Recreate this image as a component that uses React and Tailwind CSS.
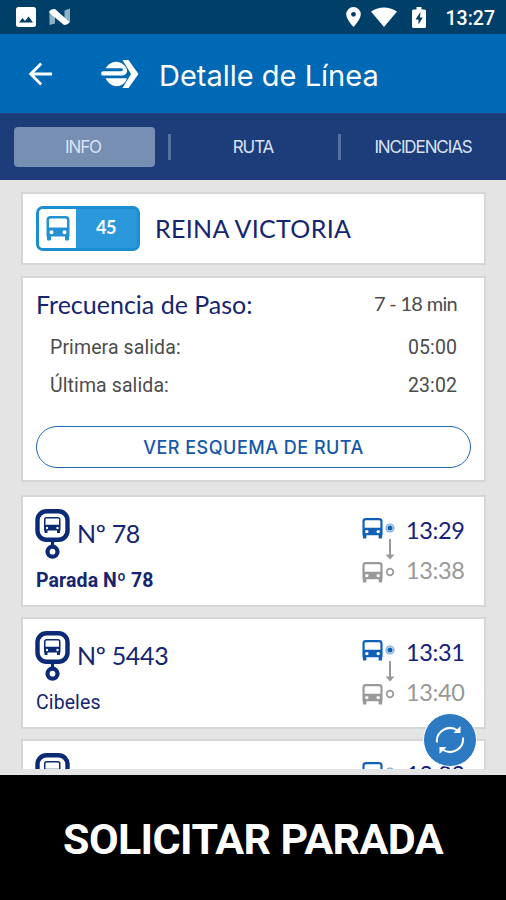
import React, { useState } from 'react';

const stops = [
    { id: 78, name: 'Parada Nº 78', next: '13:29', following: '13:38', highlighted: true },
    { id: 5443, name: 'Cibeles', next: '13:31', following: '13:40' },
    { id: null, name: '', next: '13:33', following: '' },
];

const tabs = ['INFO', 'RUTA', 'INCIDENCIAS'];

const BusIcon = ({ className }) => (
    <svg viewBox="0 0 24 25" preserveAspectRatio="none" fill="currentColor" className={className}>
        <path
            fillRule="evenodd"
            d="M4.5 0H19.5A4 4 0 0 1 23.5 4V20.5H23V23.5A1 1 0 0 1 22 24.5H20A1 1 0 0 1 19 23.5V20.5H5V23.5A1 1 0 0 1 4 24.5H2A1 1 0 0 1 1 23.5V20.5H.5V4A4 4 0 0 1 4.5 0ZM4.6 2.6A1.6 1.6 0 0 0 3 4.2V11.6H21V4.2A1.6 1.6 0 0 0 19.4 2.6ZM5.5 14.2A2 2 0 1 0 5.5 18.2A2 2 0 1 0 5.5 14.2ZM18.5 14.2A2 2 0 1 0 18.5 18.2A2 2 0 1 0 18.5 14.2Z"
        />
    </svg>
);

const StopIcon = () => (
    <svg viewBox="0 0 35 51" fill="none" className="-ml-px h-[51px] w-[35px] shrink-0 text-[#0b2a75]">
        <rect x="2.5" y="2.25" width="30" height="28.5" rx="9" stroke="currentColor" strokeWidth="4.4" />
        <path d="M17.5 31V38" stroke="currentColor" strokeWidth="3.2" />
        <circle cx="17.5" cy="42.7" r="5" stroke="currentColor" strokeWidth="4.2" />
        <path
            fill="currentColor"
            fillRule="evenodd"
            d="M11.5 8H23A2.5 2.5 0 0 1 25.5 10.5V21.5H25V24H22V21.5H12.5V24H9.5V21.5H9V10.5A2.5 2.5 0 0 1 11.5 8ZM11.5 9.4A1 1 0 0 0 10.5 10.4V15.8H24V10.4A1 1 0 0 0 23 9.4ZM12 17.8A1.2 1.2 0 1 0 12 20.2A1.2 1.2 0 1 0 12 17.8ZM22.5 17.8A1.2 1.2 0 1 0 22.5 20.2A1.2 1.2 0 1 0 22.5 17.8Z"
        />
    </svg>
);

const StatusBar = () => (
    <div className="flex h-[34px] items-center bg-[#003f68] pl-4 pr-[11px] text-white">
        <svg viewBox="0 0 20 20" className="h-5 w-5">
            <rect width="20" height="20" rx="2.5" fill="currentColor" />
            <path d="M3 15.5L6.5 11L9 14L12.5 9.5L17 15.5Z" fill="#003f68" />
        </svg>
        <svg viewBox="0 0 22 18" className="ml-[13px] h-[18px] w-[22px]">
            <path d="M.5 3H6V15.5L.5 17ZM15.500 2.500L21 .5V14.500H15.500Z" fill="#8fb1c8" />
            <path d="M.5 3Q3 .5 6 1L20.500 14Q19 17 15 17L.5 5Z" fill="currentColor" />
        </svg>
        <div className="ml-auto flex items-center">
            <svg viewBox="0 0 15 20" className="h-5 w-[15px]">
                <path fill="currentColor" fillRule="evenodd" d="M7.5 0A7.3 7.3 0 0 1 14.8 7.3C14.8 12.5 7.5 20 7.5 20S.2 12.5 .2 7.3A7.3 7.3 0 0 1 7.5 0ZM7.5 4.9A2.4 2.4 0 1 0 7.5 9.7A2.4 2.4 0 1 0 7.5 4.9Z" />
            </svg>
            <svg viewBox="0 0 26 20" className="ml-2.5 h-5 w-[26px]">
                <path fill="currentColor" d="M0 4.5Q13-3.5 26 4.5L13 20Z" />
            </svg>
            <svg viewBox="0 0 14 21" className="ml-[15px] h-[21px] w-[14px]">
                <path fill="currentColor" d="M4.5 0H9.5V2.5H12.5A1.5 1.5 0 0 1 14 4V19.5A1.5 1.5 0 0 1 12.5 21H1.5A1.5 1.5 0 0 1 0 19.5V4A1.5 1.5 0 0 1 1.5 2.5H4.5Z" />
                <path fill="#003f68" d="M8.5 5L3.5 12.5H6.5V17.5L10.8 10.5H8Z" />
            </svg>
            <span className="ml-5 mt-[3px] text-[19.5px] font-medium leading-none">13:27</span>
        </div>
    </div>
);

const Header = () => (
    <div className="flex h-[79px] items-center bg-[#0069b5] text-white">
        <svg viewBox="0 0 24 24" fill="none" stroke="currentColor" strokeWidth="2.8" className="ml-7 h-6 w-6">
            <path d="M24 12H3M13.2 1.5L2.7 12L13.2 22.5" />
        </svg>
        <svg viewBox="0 0 38 28" className="ml-[49px] h-7 w-[38px]">
            <path fill="currentColor" d="M21.5 0H27.5L37.5 14L27.5 28H21.5L30 14Z" />
            <path fill="currentColor" d="M4.500 8.300Q8.500 1.800 15 1.800Q22.500 1.800 26 9.500V11.500Q25 15.600 21 15.600H2.300A2.200 2.200 0 0 1 2.300 11.200H20Q22 11 22 9.700Q22 8.300 20 8.300Z" />
            <path fill="currentColor" d="M4.500 18.300H26L24.500 21.500Q21 26.200 15 26.200Q8.500 25.800 4.500 18.300Z" />
        </svg>
        <h1 className="ml-5 mt-[3px] whitespace-nowrap font-['Inter',sans-serif] text-[29px] leading-none">Detalle de Línea</h1>
    </div>
);

const StopCard = ({ stop }) => (
    <div className="flex h-[112px] shrink-0 justify-between border-2 border-[#d6d6d6] bg-white pl-[13px] pr-[19px]">
        <div className="pt-3 text-[#15256f]">
            <div className="flex h-[51px]">
                <StopIcon />
                {stop.id && (
                    <span className="ml-[7px] mt-[9px] whitespace-nowrap font-['Lato',sans-serif] text-[25px] leading-[30px] tracking-[-0.3px]">Nº {stop.id}</span>
                )}
            </div>
            <p className={`mt-[9px] whitespace-nowrap text-[19.5px] leading-6 tracking-[0.1px] ${stop.highlighted ? 'font-bold' : ''}`}>{stop.name}</p>
        </div>
        <div className="flex pt-5">
            <div className="flex w-[34px] flex-col">
                <div className="flex h-[22px] items-center text-[#1160b8]">
                    <BusIcon className="h-[21px] w-[21px]" />
                    <svg viewBox="0 0 10 10" className="ml-[2px] h-2.5 w-2.5">
                        <circle cx="5" cy="5" r="4" fill="#d3e4f4" stroke="#78abd8" strokeWidth="1.2" />
                        <circle cx="5" cy="5" r="2.5" fill="currentColor" />
                    </svg>
                </div>
                <svg viewBox="0 0 10 22" className="ml-[22.5px] h-[22px] w-2.5 text-[#999999]">
                    <path d="M5 0V17" stroke="currentColor" strokeWidth="2" />
                    <path d="M.5 15.5H9.5L5 20.5Z" fill="currentColor" />
                </svg>
                <div className="flex h-[22px] items-center text-[#999999]">
                    <BusIcon className="h-[21px] w-[21px]" />
                    <svg viewBox="0 0 10 10" className="ml-[2px] h-2.5 w-2.5">
                        <circle cx="5" cy="5" r="3.3" fill="none" stroke="currentColor" strokeWidth="1.7" />
                    </svg>
                </div>
            </div>
            <div className="ml-[10px] flex w-[59px] flex-col whitespace-nowrap font-['Lato',sans-serif] text-[23.5px] leading-[39.5px] tracking-[-0.4px]">
                <span className="-mt-1.5 text-[#15207b]">{stop.next}</span>
                <span className="text-[#999999]">{stop.following}</span>
            </div>
        </div>
    </div>
);

const App = () => {
    const [activeTab, setActiveTab] = useState('INFO');

    return (
        <div className="flex h-[900px] w-[506px] flex-col overflow-hidden bg-[#e4e4e4] font-['Roboto',sans-serif]">
            <StatusBar />
            <Header />

            {/* Tabs */}
            <div className="flex h-[67px] items-center bg-[#1c3d7a] px-[14px] font-['Inter',sans-serif] text-[17px] tracking-[-1.1px] text-[#d9e2f5]">
                {tabs.map((tab, idx) => (
                    <React.Fragment key={tab}>
                        {idx > 0 && <div className="mx-[13px] h-[26px] w-[3px] shrink-0 bg-[#5571a0]"></div>}
                        <button
                            onClick={() => setActiveTab(tab)}
                            className={`flex h-10 w-[141px] shrink-0 items-center justify-center rounded-[4px] pr-[3px] pt-[3px] ${activeTab === tab ? 'bg-[#768fb2]' : ''}`}
                        >
                            {tab}
                        </button>
                    </React.Fragment>
                ))}
            </div>

            {/* Line details */}
            <div className="relative h-[589px] shrink-0">
                <div className="flex h-full flex-col overflow-hidden pl-[21px] pr-5 pt-3">
                    <div className="flex h-[73px] shrink-0 items-center border-2 border-[#d6d6d6] bg-white pl-[13px]">
                        <div className="flex h-[45px] w-[104px] overflow-hidden rounded-[7px] border-[3px] border-[#1b8dd1] bg-[#2c98dc]">
                            <div className="flex w-[37px] items-center justify-center bg-white text-[#2590d4]">
                                <BusIcon className="h-[25px] w-[24px]" />
                            </div>
                            <span className="flex flex-1 items-center justify-center pb-[2px] pr-px font-['Lato',sans-serif] text-[18px] font-bold tracking-[-0.5px] text-white">45</span>
                        </div>
                        <h2 className="ml-[15px] whitespace-nowrap font-['Lato',sans-serif] text-[25px] leading-none tracking-[0.3px] text-[#15256f]">REINA VICTORIA</h2>
                    </div>

                    <div className="mt-[11px] flex h-[206px] shrink-0 flex-col border-2 border-[#d6d6d6] bg-white px-[13px] text-[19.5px] leading-6 tracking-[0.1px] text-[#4c4c4c]">
                        <div className="mt-[11px] flex h-[30px] items-center justify-between pr-[14px]">
                            <h3 className="whitespace-nowrap font-['Lato',sans-serif] text-[25px] tracking-normal text-[#15256f]">Frecuencia de Paso:</h3>
                            <span className="-mt-[2px] whitespace-nowrap font-['Lato',sans-serif] text-[20px] tracking-[-0.7px]">7 - 18 min</span>
                        </div>
                        <div className="mt-[17px] flex justify-between pl-[14px] pr-[14px]">
                            <span>Primera salida:</span>
                            <span>05:00</span>
                        </div>
                        <div className="mt-[14px] flex justify-between pl-[14px] pr-[14px]">
                            <span>Última salida:</span>
                            <span>23:02</span>
                        </div>
                        <button className="mt-7 flex h-[42px] items-center justify-center rounded-full border-[1.5px] border-[#2469b0] pt-[2px] font-['Inter',sans-serif] text-[18px] font-medium tracking-[0.5px] text-[#1457ab]">
                            VER ESQUEMA DE RUTA
                        </button>
                    </div>

                    <div className="mt-[13px] flex shrink-0 flex-col gap-2.5">
                        {stops.map((stop) => (
                            <StopCard key={stop.next} stop={stop} />
                        ))}
                    </div>
                </div>

                <button className="absolute bottom-0.5 right-[29px] flex h-[54px] w-[54px] items-center justify-center rounded-full border border-white bg-[#2b7ac2] text-white">
                    <svg viewBox="0 0 30 30" fill="none" stroke="currentColor" strokeWidth="2" className="h-[30px] w-[30px]">
                        <path d="M2 17.500A13 13 0 0 1 22.500 5.500M28 12.500A13 13 0 0 1 7.500 24.500" />
                        <path d="M25.500 1V8H18.500ZM4.500 29V22H11.500Z" fill="currentColor" stroke="none" />
                    </svg>
                </button>
            </div>

            {/* Request stop */}
            <button className="mt-[6px] flex h-[125px] shrink-0 items-center justify-center bg-black pt-1 text-[43px] font-bold tracking-[-0.6px] text-white">
                SOLICITAR PARADA
            </button>
        </div>
    );
};

export default App;
